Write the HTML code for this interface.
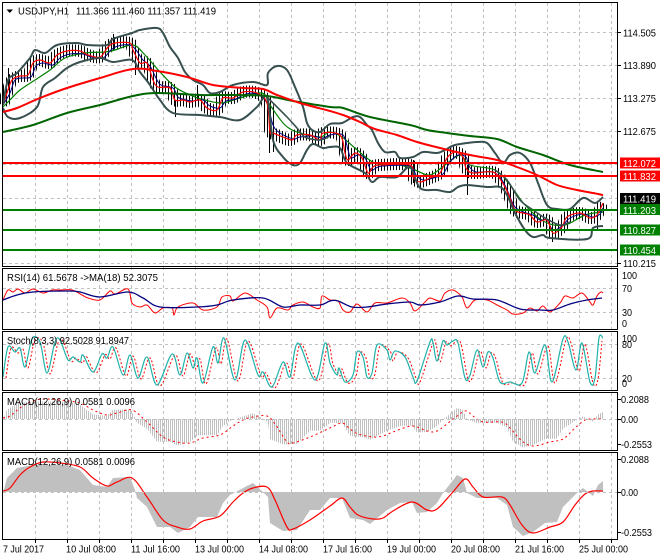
<!DOCTYPE html>
<html><head><meta charset="utf-8"><style>
html,body{margin:0;padding:0;background:#fff;width:660px;height:560px;overflow:hidden}
svg{display:block}
text{font-family:"Liberation Sans",sans-serif;font-size:10.5px;fill:#000}
.w{fill:#fff}
.f{fill:none}
</style></head><body>
<svg width="660" height="560" viewBox="0 0 660 560" xmlns="http://www.w3.org/2000/svg">
<defs>
<pattern id="st" patternUnits="userSpaceOnUse" width="2" height="10"><rect width="1" height="10" fill="#c0c0c0"/></pattern>
<pattern id="cd" patternUnits="userSpaceOnUse" width="3" height="10"><rect width="1" height="10" fill="#000"/></pattern>
</defs>
<rect width="660" height="560" fill="#fff"/>
<!-- grid -->
<g stroke="#c0c0c0" stroke-width="1" stroke-dasharray="3 3" fill="none">
<path d="M35.5 3V539M67.5 3V539M99.5 3V539M131.5 3V539M163.5 3V539M195.5 3V539M227.5 3V539M259.5 3V539M291.5 3V539M323.5 3V539M355.5 3V539M387.5 3V539M419.5 3V539M451.5 3V539M483.5 3V539M515.5 3V539M547.5 3V539M579.5 3V539M611.5 3V539"/>
<path d="M3 32.5H617M3 65.5H617M3 98.5H617M3 131.5H617M3 164.5H617M3 198.5H617M3 263.5H617M3 288.5H617M3 312.5H617M3 344.5H617M3 378.5H617"/>
</g>
<!-- candles -->
<g fill="none">
<path class="s" stroke="url(#cd)" stroke-width="12" stroke-linejoin="round" d="M3 105L7 93L12 80L20 76L28 75L33 63L40 60L50 63L57 55L67 51L80 51L88 55L100 57L108 47L115 43L130 43L133 50L140 63L147 63L153 80L158 87L170 88L175 100L183 100L190 102L200 100L207 108L217 110L223 98L233 98L243 92L257 93L267 103L270 130L277 135L290 140L297 135L310 135L320 140L323 133L340 135L345 153L348 160L355 153L362 158L368 173L373 167L380 165L410 165L413 177L420 182L430 178L440 173L447 158L455 152L463 157L466 168L473 173L493 172L502 182L508 193L515 210L523 213L530 215L537 222L547 220L553 233L562 227L567 217L580 213L590 218L597 215L603 203"/>
<path stroke="#000" stroke-width="1" d="M135.500 57V75M175.500 100V117M197.500 85V100M269.500 110V153M273.500 110V152M413.500 160V183M467.500 165V195M552.500 225V242M113.500 34V50M8.500 68V90M597.500 205V230"/>
</g>
<!-- thin green -->
<path class="f s" stroke="#008000" stroke-width="1.2" d="M3 107L10 100L20 90L35 80L50 70L65 58L85 53L105 52L115 50L133 45L145 55L160 72L175 87L190 95L205 100L222 103L240 98L262 93L270 105L285 125L300 133L320 137L330 132L342 137L355 148L375 163L400 165L415 170L430 175L445 165L460 155L470 165L495 170L510 185L525 205L545 222L565 225L585 215L603 212"/>
<!-- thin blue -->
<path class="f s" stroke="#000080" stroke-width="1" transform="translate(3,0)" d="M0 105L7 93L12 80L20 78L28 77L33 66L40 63L50 65L57 58L67 54L80 54L88 57L100 58L108 50L115 46L127 45L133 50L140 60L147 66L153 78L158 85L170 88L175 97L183 100L190 101L200 100L207 106L217 108L223 101L233 99L243 94L254 94L264 103L270 125L277 133L290 139L297 137L310 136L320 138L327 135L340 135L345 150L348 158L355 155L362 158L368 170L373 168L380 166L407 166L413 175L420 180L430 178L440 174L447 162L455 155L463 157L466 166L473 172L490 172L499 180L505 192L512 207L523 213L530 215L537 220L544 220L550 230L559 226L567 218L580 214L590 217L597 214L600 208"/>
<!-- thin fast red -->
<path class="f s" stroke="#f00" stroke-width="1.2" d="M3 105L7 93L12 80L20 76L28 75L33 63L40 60L50 63L57 55L67 51L80 51L88 55L100 57L108 47L115 43L130 43L133 50L140 63L147 63L153 80L158 87L170 88L175 100L183 100L190 102L200 100L207 108L217 110L223 98L233 98L243 92L257 93L267 103L270 132L273 133L283 137L292 140L297 135L310 135L320 140L323 133L340 135L345 153L348 160L355 153L362 158L368 173L373 167L380 165L410 165L413 177L420 182L430 178L440 173L447 158L455 152L463 157L466 168L473 173L493 172L502 182L508 193L515 210L523 213L530 215L537 222L547 220L553 233L562 227L567 217L580 213L590 218L597 215L603 203"/>
<!-- bollinger -->
<g fill="none" stroke="#37504f" stroke-width="2" stroke-linejoin="round">
<path class="s" d="M3 105L8 80L17 73L30 58L35 50L45 53L57 45L77 43L87 45L107 45L113 39L132 33L140 30L157 28L163 33L170 47L178 58L185 72L193 80L203 85L210 93L220 92L233 85L253 82L267 85L268 73L277 66L287 70L295 87L303 107L307 123L312 130L320 132L330 124L342 123L353 117L360 117L367 125L372 130L378 143L385 152L395 152L400 158L413 157L423 152L437 153L445 150L455 145L477 142L487 143L495 153L503 163L510 155L520 153L530 163L538 183L547 205L557 209L570 209L583 198L595 203L603 197"/>
<path class="s" d="M3 108L8 117L20 118L37 107L43 87L55 78L67 68L80 62L100 58L113 62L132 60L140 72L150 85L160 100L173 113L200 115L220 117L240 120L257 107L267 97L273 140L283 157L293 165L300 163L307 150L313 144L323 148L330 147L340 148L347 163L365 173L372 182L380 177L397 177L410 167L420 188L437 190L450 192L458 187L467 185L487 187L500 187L507 195L515 213L525 230L533 237L543 235L550 238L587 239L593 228L603 226"/>
<path class="s" stroke-width="1.6" d="M267 97L287 117L297 128L305 137L320 140L330 136"/>
<path class="s" stroke-width="1.6" d="M495 170L507 180L520 200L533 210L545 218L560 225L570 222"/>
</g>
<!-- long MAs -->
<path class="f s" stroke="#006400" stroke-width="2" d="M3 132L33 125L67 113L100 105L133 96L157 93L200 95L233 95L267 96L293 101L330 107L343 108L370 117L410 125L427 130L447 133L470 136L497 139L517 147L543 155L570 165L603 172"/>
<path class="f s" stroke="#f00" stroke-width="2" d="M3 112L17 108L40 98L67 88L100 78L133 69L157 71L187 77L213 85L243 88L263 89L277 95L300 103L330 111L343 115L360 122L370 127L378 130L397 135L417 142L440 148L470 155L497 160L517 167L537 175L557 185L577 190L593 193L603 195"/>
<!-- levels -->
<path stroke="#f00" stroke-width="2" d="M3 163H618M3 176H618"/>
<path stroke="#008000" stroke-width="2" d="M3 210H618M3 230H618M3 250H618"/>
<!-- RSI -->
<path class="f s" stroke="#f00" stroke-width="1" d="M3 300L8 290L13 292L18 289L25 293L33 289L43 293L52 290L60 290L72 290L82 295L88 298L100 300L110 291L115 294L128 289L132 303L140 307L147 305L155 313L163 308L172 308L174 315L178 307L193 303L203 310L217 307L222 297L230 296L233 301L245 293L257 300L267 307L270 318L277 308L288 310L293 305L303 302L313 307L320 308L322 296L330 300L338 301L343 310L350 312L357 304L367 312L375 303L387 303L402 298L410 303L415 311L425 302L430 298L440 301L445 293L453 290L462 297L467 308L475 300L487 300L497 305L507 310L513 314L523 313L530 308L537 311L543 306L550 312L560 303L565 296L573 298L582 293L590 302L593 305L597 296L601 292L603 293"/>
<path class="f s" stroke="#000080" stroke-width="1.3" d="M3 300L17 295L33 292L67 291L80 292L100 297L128 292L143 298L160 307L197 307L217 305L233 300L263 298L283 307L300 305L320 305L330 301L338 301L352 307L367 307L387 304L410 302L420 305L440 302L458 296L473 299L497 300L520 309L540 310L553 310L570 304L587 300L602 298"/>
<!-- Stoch -->
<path class="f s" stroke="#f00" stroke-width="1" stroke-dasharray="2 2" transform="translate(3,1)" d="M3 377L8 347L15 352L20 348L25 367L32 339L40 342L47 373L55 342L60 340L68 360L73 357L80 362L83 355L93 372L102 354L107 358L113 347L123 375L130 355L138 378L147 357L157 385L172 354L180 375L187 353L193 368L197 358L203 383L213 347L218 363L224 338L235 380L245 340L258 375L263 372L272 387L283 362L290 377L298 343L315 380L325 343L330 363L337 375L339 368L345 382L353 375L357 352L363 357L367 377L372 373L377 345L387 350L390 360L395 351L405 357L413 377L417 381L430 342L433 343L437 361L443 341L447 345L453 341L458 343L465 378L470 375L477 350L483 367L488 352L493 358L500 382L510 382L522 383L529 352L535 373L545 345L552 382L563 339L568 342L576 370L582 343L590 382L595 378L599 340"/>
<path class="f s" stroke="#20b2aa" stroke-width="1.2" d="M3 377L8 347L15 352L20 348L25 367L32 339L40 342L47 373L55 342L60 340L68 360L73 357L80 362L83 355L93 372L102 354L107 358L113 347L123 375L130 355L138 378L147 357L157 385L172 354L180 375L187 353L193 368L197 358L203 383L213 347L218 363L224 338L235 380L245 340L258 375L263 372L272 387L283 362L290 377L298 343L315 380L325 343L330 363L337 375L339 368L345 382L353 375L357 352L363 357L367 377L372 373L377 345L387 350L390 360L395 351L405 357L413 377L417 381L430 342L433 343L437 361L443 341L447 345L453 341L458 343L465 378L470 375L477 350L483 367L488 352L493 358L500 382L510 382L522 383L529 352L535 373L545 345L552 382L563 339L568 342L576 370L582 343L590 382L595 378L599 338L603 338"/>
<!-- MACD 1 -->
<g transform="matrix(1,0,0,.65,0,99.2)">
<path fill="url(#st)" d="M3 492L3 493L7 478L17 468L33 465L67 465L80 470L93 485L107 487L113 478L130 477L135 490L137 498L147 507L157 527L170 527L178 533L190 527L198 517L217 517L223 503L230 495L245 487L253 483L263 492L268 497L270 523L283 531L297 530L310 510L320 510L330 498L342 498L350 518L363 520L370 524L387 510L400 503L412 502L417 513L427 512L437 503L443 493L457 475L463 478L467 493L477 498L497 498L507 505L513 527L523 536L533 532L545 523L557 522L563 507L577 493L583 488L593 496L598 485L603 481L603 492Z"/>
</g>
<path class="f s" stroke="#f00" stroke-width="1" stroke-dasharray="2 3" d="M3 418L10 416L20 408L30 402L43 399L60 400L80 403L93 410L107 415L117 413L132 410L147 422L163 437L177 442L190 443L203 438L220 435L233 426L243 420L253 417L267 416L275 424L287 442L293 443L310 437L330 428L342 423L350 429L358 434L373 437L383 436L393 432L412 426L427 431L437 431L452 420L465 411L473 416L483 422L502 422L510 428L522 441L533 446L550 442L563 439L575 428L585 420L593 419L603 419"/>
<path stroke="#c0c0c0" stroke-dasharray="3 3" d="M3 419.500H617"/>
<!-- MACD 2 -->
<path fill="#c0c0c0" d="M3 492L3 493L7 478L17 468L33 465L67 465L80 470L93 485L107 487L113 478L130 477L135 490L137 498L147 507L157 527L170 527L178 533L190 527L198 517L217 517L223 503L230 495L245 487L253 483L263 492L268 497L270 523L283 531L297 530L310 510L320 510L330 498L342 498L350 518L363 520L370 524L387 510L400 503L412 502L417 513L427 512L437 503L443 493L457 475L463 478L467 493L477 498L497 498L507 505L513 527L523 536L533 532L545 523L557 522L563 507L577 493L583 488L593 496L598 485L603 481L603 492Z"/>
<path class="f s" stroke="#f00" stroke-width="1.2" d="M3 491L10 488L20 475L30 467L43 462L60 463L80 467L93 478L107 486L117 482L132 478L147 497L163 520L177 527L190 529L203 521L220 516L233 502L243 493L253 488L267 487L275 500L287 527L293 529L310 520L330 506L342 498L350 507L358 515L373 519L383 518L393 511L412 502L427 510L437 509L452 493L465 479L473 487L483 497L502 497L510 505L522 525L533 533L550 527L563 522L575 505L585 494L593 491L603 491"/>
<path stroke="#c0c0c0" stroke-dasharray="3 3" d="M3 492.500H617"/>
<!-- frames -->
<g fill="none" stroke="#000" stroke-width="1">
<rect x="2.500" y="2.500" width="615" height="264"/>
<rect x="2.500" y="268.500" width="615" height="61"/>
<rect x="2.500" y="331.500" width="615" height="59"/>
<rect x="2.500" y="392.500" width="615" height="58"/>
<rect x="2.500" y="452.500" width="615" height="87"/>
<path d="M35.500 540V543M67.500 540V543M99.500 540V543M131.500 540V543M163.500 540V543M195.500 540V543M227.500 540V543M259.500 540V543M291.500 540V543M323.500 540V543M355.500 540V543M387.500 540V543M419.500 540V543M451.500 540V543M483.500 540V543M515.500 540V543M547.500 540V543M579.500 540V543M611.500 540V543"/>
<path d="M618 32.500H621M618 65.500H621M618 98.500H621M618 131.500H621M618 263.500H621M618 399.500H621M618 444.500H621M618 419.500H621M618 459.500H621M618 492.500H621M618 532.500H621"/>
</g>
<!-- header -->
<path d="M6.500 9.500H13L9.750 13Z" fill="#000"/>
<text x="18" y="14.500" textLength="51" lengthAdjust="spacingAndGlyphs">USDJPY,H1</text>
<text x="76" y="14.500" textLength="140" lengthAdjust="spacingAndGlyphs">111.366 111.460 111.357 111.419</text>
<text x="7" y="281" textLength="151" lengthAdjust="spacingAndGlyphs">RSI(14) 61.5678  -&gt;MA(18) 52.3075</text>
<text x="7" y="344" textLength="122" lengthAdjust="spacingAndGlyphs">Stoch(8,3,3) 92.5028 91.8947</text>
<text x="7" y="405" textLength="128" lengthAdjust="spacingAndGlyphs">MACD(12,26,9) 0.0581 0.0096</text>
<text x="7" y="465" textLength="128" lengthAdjust="spacingAndGlyphs">MACD(12,26,9) 0.0581 0.0096</text>
<!-- right axis -->
<g>
<text x="623" y="36.500" textLength="33" lengthAdjust="spacingAndGlyphs">114.505</text>
<text x="623" y="69" textLength="33" lengthAdjust="spacingAndGlyphs">113.890</text>
<text x="623" y="102" textLength="33" lengthAdjust="spacingAndGlyphs">113.275</text>
<text x="623" y="135" textLength="33" lengthAdjust="spacingAndGlyphs">112.675</text>
<text x="623" y="267" textLength="33" lengthAdjust="spacingAndGlyphs">110.215</text>
<text x="622" y="279" textLength="15" lengthAdjust="spacingAndGlyphs">100</text>
<text x="622" y="292" textLength="10" lengthAdjust="spacingAndGlyphs">70</text>
<text x="622" y="316" textLength="10" lengthAdjust="spacingAndGlyphs">30</text>
<text x="622" y="327" textLength="5" lengthAdjust="spacingAndGlyphs">0</text>
<text x="622" y="342" textLength="15" lengthAdjust="spacingAndGlyphs">100</text>
<text x="622" y="348" textLength="10" lengthAdjust="spacingAndGlyphs">80</text>
<text x="622" y="382" textLength="10" lengthAdjust="spacingAndGlyphs">20</text>
<text x="622" y="387" textLength="5" lengthAdjust="spacingAndGlyphs">0</text>
<text x="621" y="403" textLength="28" lengthAdjust="spacingAndGlyphs">0.2088</text>
<text x="621" y="423" textLength="17" lengthAdjust="spacingAndGlyphs">0.00</text>
<text x="621" y="448" textLength="31" lengthAdjust="spacingAndGlyphs">-0.2553</text>
<text x="621" y="463" textLength="28" lengthAdjust="spacingAndGlyphs">0.2088</text>
<text x="621" y="496" textLength="17" lengthAdjust="spacingAndGlyphs">0.00</text>
<text x="621" y="536" textLength="31" lengthAdjust="spacingAndGlyphs">-0.2553</text>
</g>
<!-- price boxes -->
<rect x="620" y="157.500" width="40" height="11" fill="#f00"/>
<rect x="620" y="170.500" width="40" height="11" fill="#f00"/>
<rect x="620" y="193" width="40" height="11" fill="#000"/>
<rect x="620" y="204" width="40" height="11" fill="#008000"/>
<rect x="620" y="224.500" width="40" height="11" fill="#008000"/>
<rect x="620" y="244.500" width="40" height="11" fill="#008000"/>
<text class="w" x="623" y="167" textLength="33" lengthAdjust="spacingAndGlyphs">112.072</text>
<text class="w" x="623" y="180" textLength="33" lengthAdjust="spacingAndGlyphs">111.832</text>
<text class="w" x="623" y="202.500" textLength="33" lengthAdjust="spacingAndGlyphs">111.419</text>
<text class="w" x="623" y="214" textLength="33" lengthAdjust="spacingAndGlyphs">111.203</text>
<text class="w" x="623" y="234" textLength="33" lengthAdjust="spacingAndGlyphs">110.827</text>
<text class="w" x="623" y="254" textLength="33" lengthAdjust="spacingAndGlyphs">110.454</text>
<!-- dates -->
<text x="3" y="552.500" textLength="41" lengthAdjust="spacingAndGlyphs">7 Jul 2017</text>
<text x="66" y="552.500" textLength="50" lengthAdjust="spacingAndGlyphs">10 Jul 08:00</text>
<text x="131" y="552.500" textLength="49" lengthAdjust="spacingAndGlyphs">11 Jul 16:00</text>
<text x="195" y="552.500" textLength="49" lengthAdjust="spacingAndGlyphs">13 Jul 00:00</text>
<text x="259" y="552.500" textLength="49" lengthAdjust="spacingAndGlyphs">14 Jul 08:00</text>
<text x="323" y="552.500" textLength="49" lengthAdjust="spacingAndGlyphs">17 Jul 16:00</text>
<text x="387" y="552.500" textLength="49" lengthAdjust="spacingAndGlyphs">19 Jul 00:00</text>
<text x="451" y="552.500" textLength="49" lengthAdjust="spacingAndGlyphs">20 Jul 08:00</text>
<text x="515" y="552.500" textLength="49" lengthAdjust="spacingAndGlyphs">21 Jul 16:00</text>
<text x="579" y="552.500" textLength="49" lengthAdjust="spacingAndGlyphs">25 Jul 00:00</text>
</svg>
<script>
document.querySelectorAll('path.s').forEach(function(p){
  var n=p.getAttribute('d').match(/-?[\d.]+/g).map(Number),q=[];
  for(var i=0;i<n.length;i+=2)q.push([n[i],n[i+1]]);
  var d='M'+q[0][0]+' '+q[0][1];
  for(var j=0;j<q.length-1;j++){
    var a=q[Math.max(j-1,0)],b=q[j],c=q[j+1],e=q[Math.min(j+2,q.length-1)];
    d+='C'+(b[0]+(c[0]-a[0])/6).toFixed(1)+' '+(b[1]+(c[1]-a[1])/6).toFixed(1)+' '+(c[0]-(e[0]-b[0])/6).toFixed(1)+' '+(c[1]-(e[1]-b[1])/6).toFixed(1)+' '+c[0]+' '+c[1];
  }
  p.setAttribute('d',d);
});
</script>
</body></html>
